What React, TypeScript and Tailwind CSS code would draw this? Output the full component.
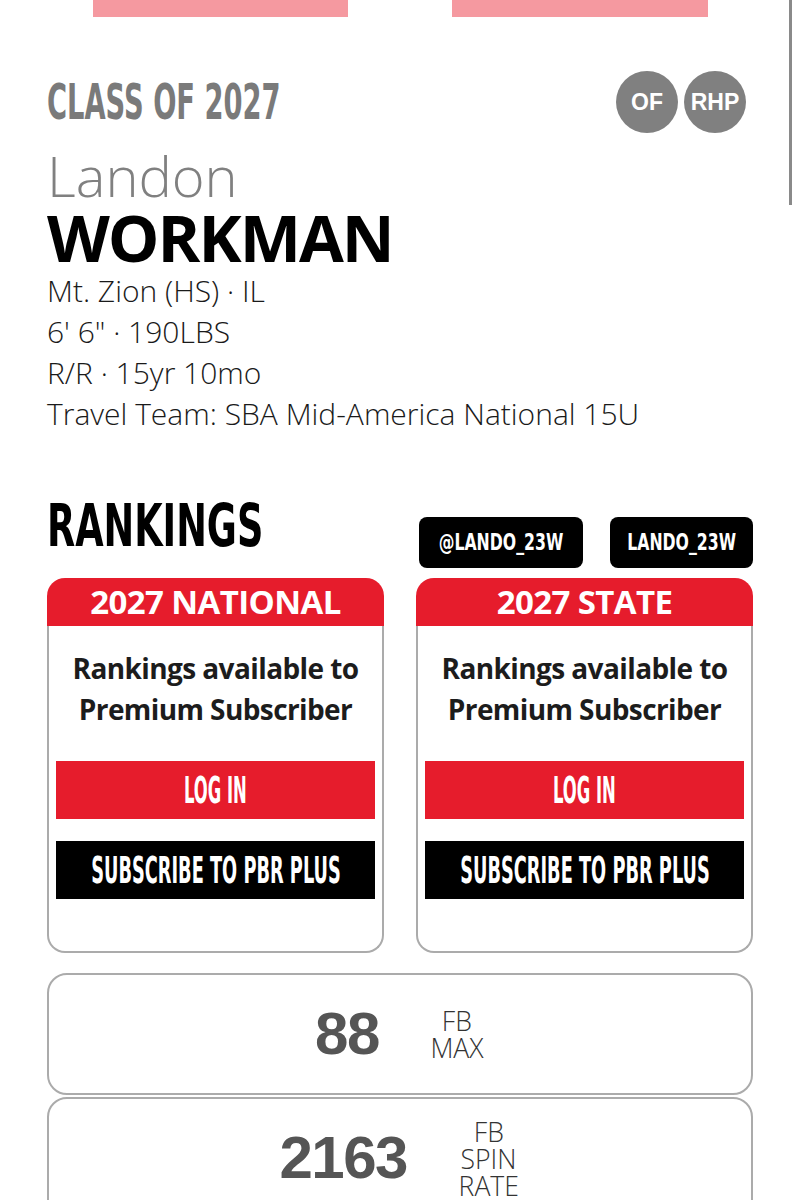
import type { ReactNode } from 'react'

type CondProps = {
  children: ReactNode
  className?: string
}

// narrow display face, squeezed further with scale-x to match the athletic lettering
function Cond({ children, className = '' }: CondProps) {
  return (
    <span
      className={`inline-block whitespace-nowrap font-['DejaVu_Sans_Condensed',sans-serif] font-bold ${className}`}
    >
      {children}
    </span>
  )
}

function RankCard({ title }: { title: string }) {
  return (
    <div className="flex flex-col">
      <div className="flex h-[48px] items-center justify-center rounded-t-[18px] bg-[#e61c2c]">
        <span className="font-['Open_Sans',sans-serif] text-[33px] font-bold tracking-[-0.6px] text-white">
          {title}
        </span>
      </div>
      <div className="flex h-[327px] flex-col rounded-b-[18px] border-2 border-t-0 border-[#ababab] px-[7px]">
        <p className="mt-[22px] text-center font-['Open_Sans',sans-serif] text-[28px] font-bold leading-[41px] tracking-[-0.6px] text-[#1c1c1c]">
          Rankings available to
          <br />
          Premium Subscriber
        </p>
        <button
          type="button"
          className="mt-[31px] flex h-[58px] w-full items-center justify-center overflow-hidden bg-[#e61c2c] text-white"
        >
          <Cond className="scale-x-[0.48] text-[38px] leading-none">LOG IN</Cond>
        </button>
        <button
          type="button"
          className="mt-[22px] flex h-[58px] w-full items-center justify-center overflow-hidden bg-black text-white"
        >
          <Cond className="scale-x-[0.52] text-[38px] leading-none">SUBSCRIBE TO PBR PLUS</Cond>
        </button>
      </div>
    </div>
  )
}

function StatCard({ value, label }: { value: string; label: string[] }) {
  return (
    <div className="flex h-[122px] items-center justify-center gap-[50px] rounded-[20px] border-2 border-[#ababab]">
      <span className="font-['Liberation_Sans',sans-serif] text-[60px] font-bold leading-none tracking-[-1.5px] text-[#555555]">
        {value}
      </span>
      <div className="flex flex-col items-center font-['Open_Sans',sans-serif] text-[28px] font-light leading-[27px] text-[#333333]">
        {label.map((l) => (
          <span key={l} className="inline-block h-[27px] scale-x-[0.95]">
            {l}
          </span>
        ))}
      </div>
    </div>
  )
}

export default function App() {
  return (
    <div className="relative h-[1200px] w-[800px] overflow-hidden bg-white">
      {/* scroll indicator */}
      <div className="absolute right-[8px] top-0 h-[205px] w-[3px] bg-[#8a8a8a]" />

      <div className="flex gap-[104px] pl-[93px]">
        <div className="h-[17px] w-[255px] bg-[#f599a0]" />
        <div className="h-[17px] w-[256px] bg-[#f599a0]" />
      </div>

      <div className="px-[47px]">
        <div className="mt-[54px] flex h-[62px] items-center justify-between">
          <Cond className="origin-left scale-x-[0.62] text-[49px] leading-none text-[#7a7a7a]">
            CLASS OF 2027
          </Cond>
          <div className="mr-[7px] flex gap-[6px]">
            <div className="flex h-[62px] w-[62px] items-center justify-center rounded-full bg-[#808080] font-['Liberation_Sans',sans-serif] text-[23px] font-bold text-white">
              OF
            </div>
            <div className="flex h-[62px] w-[62px] items-center justify-center rounded-full bg-[#808080] font-['Liberation_Sans',sans-serif] text-[23px] font-bold text-white">
              RHP
            </div>
          </div>
        </div>

        <div className="mt-[12px] font-['Open_Sans',sans-serif] text-[56px] font-light leading-[60px] text-[#808080]">
          Landon
        </div>
        <div className="font-['Open_Sans',sans-serif] text-[65px] font-bold leading-[64px] tracking-[-2px] text-black">
          WORKMAN
        </div>
        <div className="mt-[1px] font-['Open_Sans',sans-serif] text-[30px] font-light leading-[41px] text-[#1a1a1a]">
          <div>Mt. Zion (HS) · IL</div>
          <div>6' 6" · 190LBS</div>
          <div>R/R · 15yr 10mo</div>
          <div>Travel Team: SBA Mid-America National 15U</div>
        </div>

        <div className="mt-[67px] flex items-start justify-between">
          <Cond className="origin-left scale-x-[0.69] text-[59px] leading-[50px] text-black">RANKINGS</Cond>
          <div className="mt-[16px] flex gap-[27px]">
            <div className="flex h-[51px] w-[164px] items-center justify-center rounded-[8px] bg-black text-white">
              <Cond className="scale-x-[0.76] text-[23px] leading-none">@LANDO_23W</Cond>
            </div>
            <div className="flex h-[51px] w-[143px] items-center justify-center rounded-[8px] bg-black text-white">
              <Cond className="scale-x-[0.76] text-[23px] leading-none">LANDO_23W</Cond>
            </div>
          </div>
        </div>

        <div className="mt-[10px] grid grid-cols-2 gap-[32px]">
          <RankCard title="2027 NATIONAL" />
          <RankCard title="2027 STATE" />
        </div>

        <div className="mt-[20px] flex flex-col gap-[2px]">
          <StatCard value="88" label={['FB', 'MAX']} />
          <StatCard value="2163" label={['FB', 'SPIN', 'RATE']} />
        </div>
      </div>
    </div>
  )
}
